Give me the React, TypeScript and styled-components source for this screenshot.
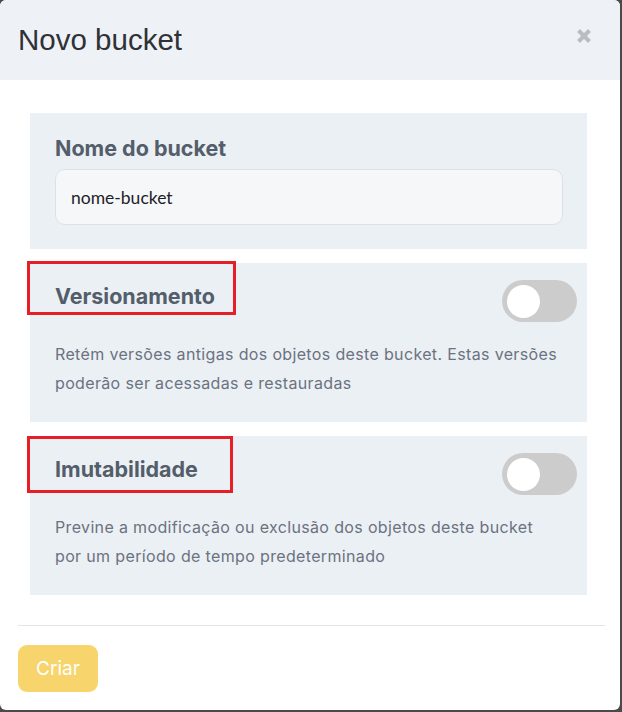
import React from "react";
import styled, { createGlobalStyle } from "styled-components";

const GlobalStyle = createGlobalStyle`
  html, body {
    margin: 0;
    padding: 0;
    background: #4a4a4a;
  }
  * { box-sizing: border-box; }
`;

const Modal = styled.div`
  width: 620px;
  height: 710px;
  background: #ffffff;
  border-radius: 6px;
  overflow: hidden;
  display: flex;
  flex-direction: column;
`;

const Header = styled.div`
  height: 80px;
  background: #eef2f7;
  padding: 0 28px 0 18px;
  display: flex;
  align-items: center;
  justify-content: space-between;
`;

const Title = styled.h4`
  margin: 0;
  font-family: "Liberation Sans", Arial, sans-serif;
  font-weight: 400;
  font-size: 29.5px;
  color: #2f3136;
`;

const CloseButton = styled.button`
  border: 0;
  background: transparent;
  padding: 0;
  width: 16px;
  height: 16px;
  display: flex;
  cursor: pointer;
  margin-top: -8px;
`;

const Body = styled.div`
  padding: 33px 33px 30px 30px;
  display: flex;
  flex-direction: column;
  gap: 14px;
`;

const Panel = styled.section<{ $pr: number; $pt: number; $pb: number }>`
  background: #ebf0f5;
  padding: ${(p) => p.$pt}px ${(p) => p.$pr}px ${(p) => p.$pb}px 25px;
`;

const Row = styled.div`
  display: flex;
  justify-content: space-between;
  align-items: flex-start;
`;

const LabelWrap = styled.div`
  position: relative;
`;

const Label = styled.label`
  display: block;
  font-family: Inter, "Noto Sans", sans-serif;
  font-weight: 700;
  font-size: 21.5px;
  line-height: 26px;
  color: #545d6a;
`;

const Annotation = styled.div<{ $w: number; $h: number; $top: number }>`
  position: absolute;
  left: -28px;
  top: ${(p) => p.$top}px;
  width: ${(p) => p.$w}px;
  height: ${(p) => p.$h}px;
  border: 3px solid #e61e25;
  pointer-events: none;
`;

const Input = styled.input`
  display: block;
  width: 508px;
  height: 56px;
  margin-top: 8px;
  padding: 0 15px;
  border: 1px solid #dde1e6;
  border-radius: 10px;
  background: #f6f7f9;
  font-family: Lato, "Noto Sans", sans-serif;
  font-size: 17.5px;
  color: #1e2128;
  outline: none;
`;

const Toggle = styled.button`
  position: relative;
  flex: none;
  width: 75px;
  height: 42px;
  margin-top: -3px;
  border: 0;
  padding: 0;
  border-radius: 21px;
  background: #cccccc;
  cursor: pointer;
`;

const Knob = styled.span`
  position: absolute;
  left: 5px;
  top: 4.5px;
  width: 33px;
  height: 33px;
  border-radius: 50%;
  background: #ffffff;
`;

const Description = styled.p`
  margin: 18px 0 0;
  max-width: 508px;
  font-family: Inter, "Noto Sans", sans-serif;
  font-size: 16px;
  letter-spacing: 0.35px;
  line-height: 29px;
  color: #6b7280;
`;

const Footer = styled.div`
  margin: 0 15px 0 18px;
  border-top: 1px solid #e2e4e7;
  padding-top: 19px;
`;

const PrimaryButton = styled.button`
  width: 80px;
  height: 47px;
  border: 0;
  border-radius: 9px;
  background: #f7d46c;
  color: #ffffff;
  font-family: Inter, "Noto Sans", sans-serif;
  font-size: 19px;
  cursor: pointer;
`;

type OptionProps = {
  title: string;
  text: string;
  boxW: number;
  boxH: number;
  boxTop: number;
};

function Option({ title, text, boxW, boxH, boxTop }: OptionProps) {
  return (
    <Panel $pr={10} $pt={20} $pb={24}>
      <Row>
        <LabelWrap>
          <Label>{title}</Label>
          <Annotation $w={boxW} $h={boxH} $top={boxTop} />
        </LabelWrap>
        <Toggle aria-label={title}>
          <Knob />
        </Toggle>
      </Row>
      <Description>{text}</Description>
    </Panel>
  );
}

export default function App() {
  return (
    <>
      <GlobalStyle />
      <Modal>
        <Header>
          <Title>Novo bucket</Title>
          <CloseButton aria-label="Fechar">
            <svg width="16" height="16" viewBox="0 0 16 16">
              <path d="M2.5 2.5 L13.5 13.5 M13.5 2.5 L2.5 13.5" stroke="#b9bcc0" strokeWidth="4" />
            </svg>
          </CloseButton>
        </Header>
        <Body>
          <Panel $pr={24} $pt={22} $pb={24}>
            <Label>Nome do bucket</Label>
            <Input defaultValue="nome-bucket" />
          </Panel>
          <Option
            title="Versionamento"
            text="Retém versões antigas dos objetos deste bucket. Estas versões poderão ser acessadas e restauradas"
            boxW={209}
            boxH={54}
            boxTop={-22}
          />
          <Option
            title="Imutabilidade"
            text="Previne a modificação ou exclusão dos objetos deste bucket por um período de tempo predeterminado"
            boxW={206}
            boxH={57}
            boxTop={-20}
          />
        </Body>
        <Footer>
          <PrimaryButton>Criar</PrimaryButton>
        </Footer>
      </Modal>
    </>
  );
}
